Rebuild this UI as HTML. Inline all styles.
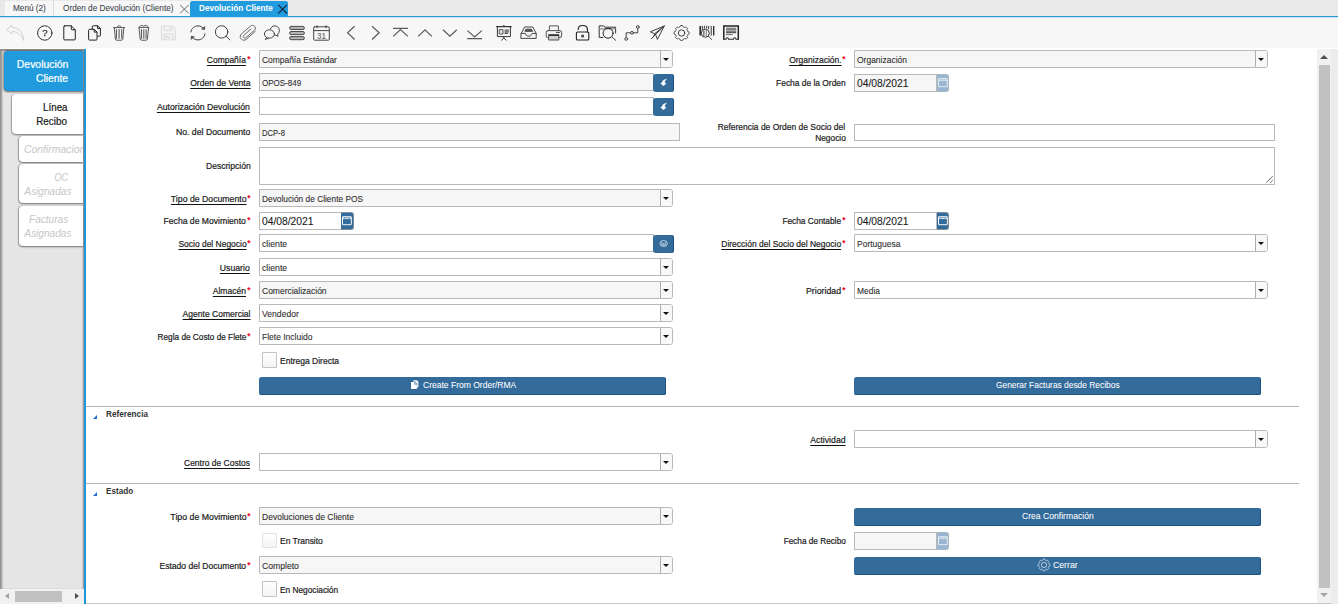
<!DOCTYPE html><html lang="es"><head><meta charset="utf-8"><title>Devolución Cliente</title><style>
*{box-sizing:border-box}
html,body{margin:0;padding:0}
body{width:1338px;height:604px;overflow:hidden;background:#fff;position:relative;font-family:"Liberation Sans",sans-serif;font-size:10px;color:#1c1c1c}
.a{position:absolute}
.t{position:absolute;white-space:nowrap;line-height:12px;height:12px;-webkit-text-stroke:.22px currentColor}
.u{text-decoration:underline;text-decoration-thickness:1px;text-underline-offset:1.5px;text-decoration-color:#111}
.req{position:absolute;color:#f0001c;font-size:9.5px;line-height:12px;font-weight:bold;transform:scale(.88);transform-origin:50% 40%}
.box{position:absolute;border:1px solid #b9b9b9;background:#fff}
.sel{position:absolute;border:1px solid #b9b9b9;background:#fff;border-radius:0 3px 3px 0}
.ro{background:#f6f6f6}
.sel .btn{position:absolute;right:0;top:0;bottom:0;width:11.5px;border-left:1px solid #adadad;background:#f8f8f8;border-radius:0 2px 2px 0}
.sel .btn:after{content:"";position:absolute;left:2.2px;top:6.8px;border-left:3.1px solid transparent;border-right:3.1px solid transparent;border-top:3.5px solid #111}
.bb{position:absolute;background:#336b9b;border-radius:3px}
.btnw{position:absolute;background:#336b9b;border-radius:2.5px;box-shadow:inset -1px -1px 0 #1f527f}
.chk{position:absolute;width:15px;height:15.5px;border:1px solid #c4c4c4;background:linear-gradient(#fff,#f4f4f4);border-radius:1px}
.hr{position:absolute;height:1px;background:#b4b4b4}
.tri{position:absolute;width:0;height:0;border-left:4px solid transparent;border-bottom:4px solid #1c6fd0}
</style></head><body>
<div class="a" style="left:0;top:0;width:1338px;height:16px;background:#e9e9e9"></div>
<div class="a" style="left:0;top:16px;width:1338px;height:1px;background:#2a9adb"></div>
<div class="a" style="left:0;top:17px;width:1338px;height:1px;background:rgba(42,154,219,.22);z-index:2"></div>
<div class="a" id="toolbar" style="left:0;top:17px;width:1338px;height:31px;background:#f7f7f7"></div>
<div class="a" id="side" style="left:0;top:49px;width:84px;height:540px;background:#e5e5e5;overflow:hidden;box-shadow:inset 3px 0 2px -1px #909090, inset 0 3px 2px -1px #8a8a8a, inset -2px 0 2px -1px #999"><div class="a" style="left:82.9px;top:0;width:1.1px;height:540px;background:#9c9c9c"></div><div class="a" style="left:4px;top:1.8px;width:79px;height:39.8px;background:#1f9bde;border-radius:4px 0 0 4px;box-shadow:0 1px 2px rgba(0,0,0,.55), -1px 0 2px rgba(0,0,0,.22), 0 -1px 1px rgba(0,0,0,.22)"></div><div class="a" style="left:11.7px;top:44.7px;width:71.3px;height:40.3px;background:#fff;border-radius:4px 0 0 4px;box-shadow:0 1px 2px rgba(0,0,0,.5), -1px 0 1px rgba(0,0,0,.18)"></div><div class="a" style="left:18.8px;top:87.2px;width:64.2px;height:25.4px;background:#fff;border-radius:4px 0 0 4px;box-shadow:0 1px 2px rgba(0,0,0,.5), -1px 0 1px rgba(0,0,0,.22)"></div><div class="a" style="left:18.8px;top:115.2px;width:64.2px;height:39.2px;background:#fff;border-radius:4px 0 0 4px;box-shadow:0 1px 2px rgba(0,0,0,.5), -1px 0 1px rgba(0,0,0,.22)"></div><div class="a" style="left:18.8px;top:157.4px;width:64.2px;height:39.4px;background:#fff;border-radius:4px 0 0 4px;box-shadow:0 1px 2px rgba(0,0,0,.5), -1px 0 1px rgba(0,0,0,.22)"></div></div>
<div class="t" style="top:58.00px;font-size:10.6px;color:#fff;right:1270.00px;transform-origin:100% 50%;transform:scaleX(0.9843);">Devolución</div>
<div class="t" style="top:72.00px;font-size:10.6px;color:#fff;right:1270.00px;transform-origin:100% 50%;transform:scaleX(0.9702);">Cliente</div>
<div class="t" style="top:101.00px;font-size:10.6px;color:#1a1a1a;right:1270.60px;transform-origin:100% 50%;transform:scaleX(0.9202);">Línea</div>
<div class="t" style="top:115.00px;font-size:10.6px;color:#1a1a1a;right:1270.60px;transform-origin:100% 50%;transform:scaleX(0.9338);">Recibo</div>
<div class="a" style="left:0;top:0;width:83px;height:300px;overflow:hidden">
<div class="t" style="top:143.00px;font-size:10.6px;font-style:italic;-webkit-text-stroke-width:0;color:#c6c6c6;left:24.30px;transform-origin:0 50%;transform:scaleX(0.9836);">Confirmacion</div>
</div>
<div class="t" style="top:171.00px;font-size:10.6px;font-style:italic;-webkit-text-stroke-width:0;color:#c6c6c6;right:1269.70px;transform-origin:100% 50%;transform:scaleX(0.8433);">OC</div>
<div class="t" style="top:185.00px;font-size:10.6px;font-style:italic;-webkit-text-stroke-width:0;color:#c6c6c6;right:1266.80px;transform-origin:100% 50%;transform:scaleX(0.9538);">Asignadas</div>
<div class="t" style="top:213.00px;font-size:10.6px;font-style:italic;-webkit-text-stroke-width:0;color:#c6c6c6;right:1269.70px;transform-origin:100% 50%;transform:scaleX(0.9510);">Facturas</div>
<div class="t" style="top:227.00px;font-size:10.6px;font-style:italic;-webkit-text-stroke-width:0;color:#c6c6c6;right:1266.80px;transform-origin:100% 50%;transform:scaleX(0.9538);">Asignadas</div>
<div class="a" style="left:0;top:589px;width:84px;height:15px;background:#f1f1f1"></div>
<div class="a" style="left:15px;top:591px;width:47px;height:10.8px;background:#c1c1c1"></div>
<div class="a" style="left:5px;top:592.8px;width:0;height:0;border-top:3.7px solid transparent;border-bottom:3.7px solid transparent;border-right:4.2px solid #a3a3a3"></div>
<div class="a" style="left:75px;top:592.8px;width:0;height:0;border-top:3.7px solid transparent;border-bottom:3.7px solid transparent;border-left:4.2px solid #505050"></div>
<div class="a" style="left:83.8px;top:49px;width:2.3px;height:555px;background:#1f96dc"></div>
<div class="a" style="left:1317px;top:49px;width:14.3px;height:555px;background:#f1f1f1"></div>
<div class="a" style="left:1331.3px;top:49px;width:7px;height:555px;background:#ececec"></div>
<div class="a" style="left:1319px;top:65px;width:11px;height:523px;background:#c1c1c1"></div>
<div class="a" style="left:1320.3px;top:54.5px;width:0;height:0;border-left:4.2px solid transparent;border-right:4.2px solid transparent;border-bottom:4.6px solid #505050"></div>
<div class="a" style="left:1320.3px;top:592.9px;width:0;height:0;border-left:4.2px solid transparent;border-right:4.2px solid transparent;border-top:4.6px solid #a3a3a3"></div>
<div class="a" style="left:86px;top:602.6px;width:1245.3px;height:1.4px;background:#c6c6c6"></div>
<div class="sel ro" style="left:259px;top:50px;width:413.7px;height:18.0px"><div class="btn"></div></div>
<div class="t" style="top:53.50px;font-size:9.5px;color:#2e2e2e;left:262.00px;transform-origin:0 50%;transform:scaleX(0.8864);-webkit-text-stroke-width:.1px;">Compañía Estándar</div>
<div class="req" style="left:246.8px;top:53.8px">*</div>
<div class="t u" style="top:53.50px;font-size:9.5px;right:1091.70px;transform-origin:100% 50%;transform:scaleX(0.8895);">Compañía</div>
<div class="box ro" style="left:259px;top:73px;width:395px;height:18.0px"></div>
<div class="t" style="top:76.50px;font-size:9.5px;color:#2e2e2e;left:262.00px;transform-origin:0 50%;transform:scaleX(0.8414);-webkit-text-stroke-width:.1px;">OPOS-849</div>
<div class="bb" style="left:653.3px;top:74.0px;width:20.6px;height:18px;box-shadow:inset -1px 0 0 #1c4f7e"></div>
<svg class="a" style="left:653.3px;top:74.0px" width="21" height="18" viewBox="0 0 21 18"><path d="M14.4 4.8 C10.4 5.3 8.7 7.3 8.9 9 L7.1 9.1 L10.3 12 L13.8 9.3 L12 9.2 C11.6 7.6 12.3 6.2 14.4 4.8 Z" fill="#fff"/></svg>
<div class="t u" style="top:76.50px;font-size:9.5px;right:1087.80px;transform-origin:100% 50%;transform:scaleX(0.9074);">Orden de Venta</div>
<div class="box" style="left:259px;top:97px;width:395px;height:18.0px"></div>
<div class="bb" style="left:653.3px;top:98.0px;width:20.6px;height:18px;box-shadow:inset -1px 0 0 #1c4f7e"></div>
<svg class="a" style="left:653.3px;top:98.0px" width="21" height="18" viewBox="0 0 21 18"><path d="M14.4 4.8 C10.4 5.3 8.7 7.3 8.9 9 L7.1 9.1 L10.3 12 L13.8 9.3 L12 9.2 C11.6 7.6 12.3 6.2 14.4 4.8 Z" fill="#fff"/></svg>
<div class="t u" style="top:100.50px;font-size:9.5px;right:1087.80px;transform-origin:100% 50%;transform:scaleX(0.9125);">Autorización Devolución</div>
<div class="box ro" style="left:259px;top:123px;width:421px;height:18.0px"></div>
<div class="t" style="top:126.50px;font-size:9.5px;color:#2e2e2e;left:262.00px;transform-origin:0 50%;transform:scaleX(0.8031);-webkit-text-stroke-width:.1px;">DCP-8</div>
<div class="t" style="top:125.50px;font-size:9.5px;right:1087.80px;transform-origin:100% 50%;transform:scaleX(0.9148);">No. del Documento</div>
<div class="box" style="left:259px;top:147.2px;width:1016px;height:37.8px"></div>
<svg class="a" style="left:1264px;top:174px" width="10" height="10" viewBox="1264 174 10 10"><path d="M1266.1 182.8 L1272.8 176.1 M1270.3 182.8 L1272.8 180.3" stroke="#4a4a4a" stroke-width=".8" fill="none"/></svg>
<div class="t" style="top:159.50px;font-size:9.5px;right:1087.80px;transform-origin:100% 50%;transform:scaleX(0.8985);">Descripción</div>
<div class="sel ro" style="left:259px;top:189px;width:413.7px;height:18.0px"><div class="btn"></div></div>
<div class="t" style="top:192.50px;font-size:9.5px;color:#2e2e2e;left:262.00px;transform-origin:0 50%;transform:scaleX(0.8773);-webkit-text-stroke-width:.1px;">Devolución de Cliente POS</div>
<div class="req" style="left:246.8px;top:192.8px">*</div>
<div class="t u" style="top:192.50px;font-size:9.5px;right:1091.70px;transform-origin:100% 50%;transform:scaleX(0.9169);">Tipo de Documento</div>
<div class="box" style="left:259px;top:212px;width:83px;height:18.0px"></div>
<div class="t" style="top:215.00px;font-size:11px;-webkit-text-stroke-width:.08px;color:#1c1c1c;left:262.00px;transform-origin:0 50%;transform:scaleX(0.9353);-webkit-text-stroke-width:.1px;">04/08/2021</div>
<div class="bb" style="left:341.4px;top:212px;width:12.4px;height:18.0px;border-radius:0 3px 3px 0;background:#336b9b;border:1px solid #7f8d9b;border-left:none"></div>
<svg class="a" style="left:341.4px;top:212px" width="13" height="18" viewBox="0 0 13 18" fill="none" stroke="#fff" stroke-width=".95"><rect x="1.5" y="4.7" width="8.8" height="8" rx=".3"/><path d="M1.5 6.3 H10.3" stroke-width="1.6" stroke-opacity=".75"/><path d="M3.6 5.5 V6.5 M8.2 5.5 V6.5" stroke="#336b9b" stroke-width=".8"/></svg>
<div class="req" style="left:246.8px;top:214.8px">*</div>
<div class="t" style="top:214.50px;font-size:9.5px;right:1091.70px;transform-origin:100% 50%;transform:scaleX(0.9061);">Fecha de Movimiento</div>
<div class="box" style="left:259px;top:234px;width:395px;height:18.0px"></div>
<div class="t" style="top:237.50px;font-size:9.5px;color:#2e2e2e;left:262.00px;transform-origin:0 50%;transform:scaleX(0.9174);-webkit-text-stroke-width:.1px;">cliente</div>
<div class="bb" style="left:653.3px;top:235.0px;width:20.6px;height:18px;box-shadow:inset -1px 0 0 #1c4f7e"></div>
<svg class="a" style="left:653.3px;top:235.0px" width="21" height="18" viewBox="0 0 21 18" fill="none" stroke="rgba(255,255,255,.72)" stroke-width=".9"><ellipse cx="10.6" cy="8.5" rx="3.7" ry="3"/><path d="M8.9 7 V10 H12.3 V7 M10.6 8.2 V10"/></svg>
<div class="req" style="left:246.8px;top:237.8px">*</div>
<div class="t u" style="top:237.50px;font-size:9.5px;right:1091.70px;transform-origin:100% 50%;transform:scaleX(0.8893);">Socio del Negocio</div>
<div class="sel" style="left:259px;top:258px;width:413.7px;height:18.0px"><div class="btn"></div></div>
<div class="t" style="top:261.50px;font-size:9.5px;color:#2e2e2e;left:262.00px;transform-origin:0 50%;transform:scaleX(0.9174);-webkit-text-stroke-width:.1px;">cliente</div>
<div class="t u" style="top:261.50px;font-size:9.5px;right:1087.80px;transform-origin:100% 50%;transform:scaleX(0.9130);">Usuario</div>
<div class="sel ro" style="left:259px;top:281px;width:413.7px;height:18.0px"><div class="btn"></div></div>
<div class="t" style="top:284.50px;font-size:9.5px;color:#2e2e2e;left:262.00px;transform-origin:0 50%;transform:scaleX(0.8930);-webkit-text-stroke-width:.1px;">Comercialización</div>
<div class="req" style="left:246.8px;top:284.8px">*</div>
<div class="t u" style="top:284.50px;font-size:9.5px;right:1091.70px;transform-origin:100% 50%;transform:scaleX(0.8981);">Almacén</div>
<div class="sel" style="left:259px;top:304px;width:413.7px;height:18.0px"><div class="btn"></div></div>
<div class="t" style="top:307.50px;font-size:9.5px;color:#2e2e2e;left:262.00px;transform-origin:0 50%;transform:scaleX(0.9069);-webkit-text-stroke-width:.1px;">Vendedor</div>
<div class="t u" style="top:307.50px;font-size:9.5px;right:1087.80px;transform-origin:100% 50%;transform:scaleX(0.8992);">Agente Comercial</div>
<div class="sel" style="left:259px;top:327px;width:413.7px;height:18.0px"><div class="btn"></div></div>
<div class="t" style="top:330.50px;font-size:9.5px;color:#2e2e2e;left:262.00px;transform-origin:0 50%;transform:scaleX(0.8936);-webkit-text-stroke-width:.1px;">Flete Incluido</div>
<div class="req" style="left:246.8px;top:330.8px">*</div>
<div class="t" style="top:330.50px;font-size:9.5px;right:1091.70px;transform-origin:100% 50%;transform:scaleX(0.8677);">Regla de Costo de Flete</div>
<div class="chk" style="left:262.1px;top:352.1px"></div>
<div class="t" style="top:354.50px;font-size:9.5px;left:280.30px;transform-origin:0 50%;transform:scaleX(0.8937);">Entrega Directa</div>
<div class="btnw" style="left:259px;top:377.1px;width:407px;height:17.8px"></div>
<div class="t" style="top:378.50px;font-size:9.5px;color:#fff;left:423.40px;transform-origin:0 50%;transform:scaleX(0.8971);-webkit-text-stroke-width:.05px;">Create From Order/RMA</div>
<svg class="a" style="left:410px;top:379px" width="10" height="11" viewBox="410 379 10 11"><path d="M413.3 380.2 H416.8 L418.4 381.8 V387.6 H417.2 V383.6 L415 381.4 H413.3 Z" fill="#fff"/><path d="M411 382.1 H414.5 V384.4 H416.9 V389 H411 Z M415.2 382.3 L416.8 383.8 H415.2 Z" fill="#fff"/></svg>
<div class="sel ro" style="left:854.1px;top:50px;width:413.7px;height:18.0px"><div class="btn"></div></div>
<div class="t" style="top:53.50px;font-size:9.5px;color:#2e2e2e;left:857.10px;transform-origin:0 50%;transform:scaleX(0.8931);-webkit-text-stroke-width:.1px;">Organización</div>
<div class="req" style="left:842.0px;top:53.8px">*</div>
<div class="t u" style="top:53.50px;font-size:9.5px;right:496.50px;transform-origin:100% 50%;transform:scaleX(0.8955);">Organización.</div>
<div class="box ro" style="left:854.1px;top:74px;width:83px;height:18.0px"></div>
<div class="t" style="top:77.00px;font-size:11px;-webkit-text-stroke-width:.08px;color:#1c1c1c;left:857.10px;transform-origin:0 50%;transform:scaleX(0.9353);-webkit-text-stroke-width:.1px;">04/08/2021</div>
<div class="bb" style="left:936.5px;top:74px;width:12.4px;height:18.0px;border-radius:0 3px 3px 0;background:#99b5d0;border:1px solid #a9b6c4;border-left:none"></div>
<svg class="a" style="left:936.5px;top:74px" width="13" height="18" viewBox="0 0 13 18" fill="none" stroke="#e8f0f7" stroke-width=".95"><rect x="1.5" y="4.7" width="8.8" height="8" rx=".3"/><path d="M1.5 6.3 H10.3" stroke-width="1.6" stroke-opacity=".75"/><path d="M3.6 5.5 V6.5 M8.2 5.5 V6.5" stroke="#99b5d0" stroke-width=".8"/></svg>
<div class="t" style="top:76.50px;font-size:9.5px;right:492.60px;transform-origin:100% 50%;transform:scaleX(0.8845);">Fecha de la Orden</div>
<div class="box" style="left:854.1px;top:124px;width:421px;height:17.0px"></div>
<div class="t" style="top:120.50px;font-size:9.5px;right:492.60px;transform-origin:100% 50%;transform:scaleX(0.8908);">Referencia de Orden de Socio del</div>
<div class="t" style="top:131.50px;font-size:9.5px;right:492.60px;transform-origin:100% 50%;transform:scaleX(0.8807);">Negocio</div>
<div class="box" style="left:854.1px;top:212px;width:83px;height:18.0px"></div>
<div class="t" style="top:215.00px;font-size:11px;-webkit-text-stroke-width:.08px;color:#1c1c1c;left:857.10px;transform-origin:0 50%;transform:scaleX(0.9353);-webkit-text-stroke-width:.1px;">04/08/2021</div>
<div class="bb" style="left:936.5px;top:212px;width:12.4px;height:18.0px;border-radius:0 3px 3px 0;background:#336b9b;border:1px solid #7f8d9b;border-left:none"></div>
<svg class="a" style="left:936.5px;top:212px" width="13" height="18" viewBox="0 0 13 18" fill="none" stroke="#fff" stroke-width=".95"><rect x="1.5" y="4.7" width="8.8" height="8" rx=".3"/><path d="M1.5 6.3 H10.3" stroke-width="1.6" stroke-opacity=".75"/><path d="M3.6 5.5 V6.5 M8.2 5.5 V6.5" stroke="#336b9b" stroke-width=".8"/></svg>
<div class="req" style="left:842.0px;top:214.8px">*</div>
<div class="t" style="top:214.50px;font-size:9.5px;right:496.50px;transform-origin:100% 50%;transform:scaleX(0.8751);">Fecha Contable</div>
<div class="sel" style="left:854.1px;top:234px;width:413.7px;height:18.0px"><div class="btn"></div></div>
<div class="t" style="top:237.50px;font-size:9.5px;color:#2e2e2e;left:857.10px;transform-origin:0 50%;transform:scaleX(0.8931);-webkit-text-stroke-width:.1px;">Portuguesa</div>
<div class="req" style="left:842.0px;top:237.8px">*</div>
<div class="t u" style="top:237.50px;font-size:9.5px;right:496.50px;transform-origin:100% 50%;transform:scaleX(0.8938);">Dirección del Socio del Negocio</div>
<div class="sel" style="left:854.1px;top:281px;width:413.7px;height:18.0px"><div class="btn"></div></div>
<div class="t" style="top:284.50px;font-size:9.5px;color:#2e2e2e;left:857.10px;transform-origin:0 50%;transform:scaleX(0.8889);-webkit-text-stroke-width:.1px;">Media</div>
<div class="req" style="left:842.0px;top:284.8px">*</div>
<div class="t" style="top:284.50px;font-size:9.5px;right:496.50px;transform-origin:100% 50%;transform:scaleX(0.9229);">Prioridad</div>
<div class="btnw" style="left:854.1px;top:377.1px;width:407px;height:17.8px"></div>
<div class="t" style="top:378.50px;font-size:9.5px;color:#fff;left:996.10px;transform-origin:0 50%;transform:scaleX(0.8833);-webkit-text-stroke-width:.05px;">Generar Facturas desde Recibos</div>
<div class="hr" style="left:86px;top:406px;width:1213px"></div>
<div class="tri" style="left:93.2px;top:414.6px"></div>
<div class="t" style="top:408.00px;font-size:9.2px;font-weight:bold;-webkit-text-stroke-width:0;color:#333;left:106.20px;transform-origin:0 50%;transform:scaleX(0.8939);">Referencia</div>
<div class="sel" style="left:854.1px;top:430px;width:413.7px;height:18.0px"><div class="btn"></div></div>
<div class="t u" style="top:433.50px;font-size:9.5px;right:492.60px;transform-origin:100% 50%;transform:scaleX(0.9154);">Actividad</div>
<div class="sel" style="left:259px;top:453px;width:413.7px;height:18.0px"><div class="btn"></div></div>
<div class="t u" style="top:456.50px;font-size:9.5px;right:1087.80px;transform-origin:100% 50%;transform:scaleX(0.8913);">Centro de Costos</div>
<div class="hr" style="left:86px;top:483px;width:1213px"></div>
<div class="tri" style="left:93.2px;top:491.6px"></div>
<div class="t" style="top:485.00px;font-size:9.2px;font-weight:bold;-webkit-text-stroke-width:0;color:#333;left:106.20px;transform-origin:0 50%;transform:scaleX(0.8844);">Estado</div>
<div class="sel ro" style="left:259px;top:507px;width:413.7px;height:18.0px"><div class="btn"></div></div>
<div class="t" style="top:510.50px;font-size:9.5px;color:#2e2e2e;left:262.00px;transform-origin:0 50%;transform:scaleX(0.8970);-webkit-text-stroke-width:.1px;">Devoluciones de Cliente</div>
<div class="req" style="left:246.8px;top:510.8px">*</div>
<div class="t" style="top:510.50px;font-size:9.5px;right:1091.70px;transform-origin:100% 50%;transform:scaleX(0.9231);">Tipo de Movimiento</div>
<div class="chk" style="left:262.1px;top:532.5px;border-color:#e2e2e2"></div>
<div class="t" style="top:534.50px;font-size:9.5px;left:280.30px;transform-origin:0 50%;transform:scaleX(0.8905);">En Transito</div>
<div class="sel ro" style="left:259px;top:556px;width:413.7px;height:18.0px"><div class="btn"></div></div>
<div class="t" style="top:559.50px;font-size:9.5px;color:#2e2e2e;left:262.00px;transform-origin:0 50%;transform:scaleX(0.9073);-webkit-text-stroke-width:.1px;">Completo</div>
<div class="req" style="left:246.8px;top:559.8px">*</div>
<div class="t" style="top:559.50px;font-size:9.5px;right:1091.70px;transform-origin:100% 50%;transform:scaleX(0.9020);">Estado del Documento</div>
<div class="chk" style="left:262.1px;top:581px"></div>
<div class="t" style="top:583.50px;font-size:9.5px;left:280.30px;transform-origin:0 50%;transform:scaleX(0.8731);">En Negociación</div>
<div class="btnw" style="left:854.1px;top:507.9px;width:407px;height:17.8px"></div>
<div class="t" style="top:509.50px;font-size:9.5px;color:#fff;left:1021.80px;transform-origin:0 50%;transform:scaleX(0.9053);-webkit-text-stroke-width:.05px;">Crea Confirmación</div>
<div class="box ro" style="left:854.1px;top:532px;width:83px;height:18.0px"></div>
<div class="bb" style="left:936.5px;top:532px;width:12.4px;height:18.0px;border-radius:0 3px 3px 0;background:#99b5d0;border:1px solid #a9b6c4;border-left:none"></div>
<svg class="a" style="left:936.5px;top:532px" width="13" height="18" viewBox="0 0 13 18" fill="none" stroke="#e8f0f7" stroke-width=".95"><rect x="1.5" y="4.7" width="8.8" height="8" rx=".3"/><path d="M1.5 6.3 H10.3" stroke-width="1.6" stroke-opacity=".75"/><path d="M3.6 5.5 V6.5 M8.2 5.5 V6.5" stroke="#99b5d0" stroke-width=".8"/></svg>
<div class="t" style="top:534.50px;font-size:9.5px;right:492.60px;transform-origin:100% 50%;transform:scaleX(0.8660);">Fecha de Recibo</div>
<div class="btnw" style="left:854.1px;top:557.1px;width:407px;height:17.8px"></div>
<svg class="a" style="left:1037px;top:558px" width="14" height="14" viewBox="-7 -7 14 14" fill="none" stroke="rgba(255,255,255,.85)" stroke-width=".75"><circle r="2.6"/><path d="M0.00 -5.90 L0.19 -5.90 L0.39 -5.89 L0.58 -5.87 L0.77 -5.85 L0.94 -5.71 L1.05 -5.30 L1.14 -4.88 L1.27 -4.73 L1.42 -4.69 L1.58 -4.64 L1.73 -4.59 L1.88 -4.53 L2.02 -4.46 L2.17 -4.39 L2.31 -4.32 L2.45 -4.24 L2.65 -4.26 L3.00 -4.49 L3.37 -4.70 L3.59 -4.68 L3.74 -4.56 L3.89 -4.44 L4.03 -4.31 L4.17 -4.17 L4.31 -4.03 L4.44 -3.89 L4.56 -3.74 L4.68 -3.59 L4.70 -3.37 L4.49 -3.00 L4.26 -2.65 L4.24 -2.45 L4.32 -2.31 L4.39 -2.17 L4.46 -2.02 L4.53 -1.88 L4.59 -1.73 L4.64 -1.58 L4.69 -1.42 L4.73 -1.27 L4.88 -1.14 L5.30 -1.05 L5.71 -0.94 L5.85 -0.77 L5.87 -0.58 L5.89 -0.39 L5.90 -0.19 L5.90 -0.00 L5.90 0.19 L5.89 0.39 L5.87 0.58 L5.85 0.77 L5.71 0.94 L5.30 1.05 L4.88 1.14 L4.73 1.27 L4.69 1.42 L4.64 1.58 L4.59 1.73 L4.53 1.88 L4.46 2.02 L4.39 2.17 L4.32 2.31 L4.24 2.45 L4.26 2.65 L4.49 3.00 L4.70 3.37 L4.68 3.59 L4.56 3.74 L4.44 3.89 L4.31 4.03 L4.17 4.17 L4.03 4.31 L3.89 4.44 L3.74 4.56 L3.59 4.68 L3.37 4.70 L3.00 4.49 L2.65 4.26 L2.45 4.24 L2.31 4.32 L2.17 4.39 L2.02 4.46 L1.88 4.53 L1.73 4.59 L1.58 4.64 L1.42 4.69 L1.27 4.73 L1.14 4.88 L1.05 5.30 L0.94 5.71 L0.77 5.85 L0.58 5.87 L0.39 5.89 L0.19 5.90 L0.00 5.90 L-0.19 5.90 L-0.39 5.89 L-0.58 5.87 L-0.77 5.85 L-0.94 5.71 L-1.05 5.30 L-1.14 4.88 L-1.27 4.73 L-1.42 4.69 L-1.58 4.64 L-1.73 4.59 L-1.88 4.53 L-2.02 4.46 L-2.17 4.39 L-2.31 4.32 L-2.45 4.24 L-2.65 4.26 L-3.00 4.49 L-3.37 4.70 L-3.59 4.68 L-3.74 4.56 L-3.89 4.44 L-4.03 4.31 L-4.17 4.17 L-4.31 4.03 L-4.44 3.89 L-4.56 3.74 L-4.68 3.59 L-4.70 3.37 L-4.49 3.00 L-4.26 2.65 L-4.24 2.45 L-4.32 2.31 L-4.39 2.17 L-4.46 2.02 L-4.53 1.88 L-4.59 1.73 L-4.64 1.58 L-4.69 1.42 L-4.73 1.27 L-4.88 1.14 L-5.30 1.05 L-5.71 0.94 L-5.85 0.77 L-5.87 0.58 L-5.89 0.39 L-5.90 0.19 L-5.90 0.00 L-5.90 -0.19 L-5.89 -0.39 L-5.87 -0.58 L-5.85 -0.77 L-5.71 -0.94 L-5.30 -1.05 L-4.88 -1.14 L-4.73 -1.27 L-4.69 -1.42 L-4.64 -1.58 L-4.59 -1.73 L-4.53 -1.88 L-4.46 -2.02 L-4.39 -2.17 L-4.32 -2.31 L-4.24 -2.45 L-4.26 -2.65 L-4.49 -3.00 L-4.70 -3.37 L-4.68 -3.59 L-4.56 -3.74 L-4.44 -3.89 L-4.31 -4.03 L-4.17 -4.17 L-4.03 -4.31 L-3.89 -4.44 L-3.74 -4.56 L-3.59 -4.68 L-3.37 -4.70 L-3.00 -4.49 L-2.65 -4.26 L-2.45 -4.24 L-2.31 -4.32 L-2.17 -4.39 L-2.02 -4.46 L-1.88 -4.53 L-1.73 -4.59 L-1.58 -4.64 L-1.42 -4.69 L-1.27 -4.73 L-1.14 -4.88 L-1.05 -5.30 L-0.94 -5.71 L-0.77 -5.85 L-0.58 -5.87 L-0.39 -5.89 L-0.19 -5.90 Z"/></svg>
<div class="t" style="top:558.50px;font-size:9.5px;color:#fff;left:1052.70px;transform-origin:0 50%;transform:scaleX(0.9138);-webkit-text-stroke-width:.05px;">Cerrar</div>
<div class="a" style="left:4.7px;top:0.5px;width:185px;height:15.5px;background:#f7f7f7"></div>
<div class="a" style="left:53.3px;top:0.5px;width:1px;height:15.5px;background:#dcdcdc"></div>
<div class="t" style="top:1.50px;font-size:9.5px;color:#40444c;left:13.20px;transform-origin:0 50%;transform:scaleX(0.8628);-webkit-text-stroke-width:.08px;">Menú (2)</div>
<div class="t" style="top:1.50px;font-size:9.5px;color:#40444c;left:63.30px;transform-origin:0 50%;transform:scaleX(0.8647);-webkit-text-stroke-width:.08px;">Orden de Devolución (Cliente)</div>
<svg class="a" style="left:179px;top:3px" width="11" height="12" viewBox="179 3 11 12"><path d="M180.2 4.9 L188.6 13.3 M188.6 4.9 L180.2 13.3" stroke="#666" stroke-width="1" fill="none"/></svg>
<div class="a" style="left:189.6px;top:1px;width:98.4px;height:16px;background:#1f9bde;border-radius:2.5px 2.5px 0 0"></div>
<div class="t" style="top:1.50px;font-size:9.5px;font-weight:bold;-webkit-text-stroke-width:0;color:#fff;left:198.60px;transform-origin:0 50%;transform:scaleX(0.8642);">Devolución Cliente</div>
<svg class="a" style="left:277px;top:3px" width="11" height="12" viewBox="277 3 11 12"><path d="M278.3 4.9 L286.9 13.5 M286.9 4.9 L278.3 13.5" stroke="#14283a" stroke-width="1.1" fill="none"/></svg>
<svg class="a" style="left:0;top:17px;will-change:transform" width="760" height="31" viewBox="0 17 760 31" fill="none" stroke="#2e2e2e" stroke-width="1" stroke-linecap="round" stroke-linejoin="round">
<!-- undo (disabled) -->
<g stroke="#cdcdcd" stroke-width=".9">
<path d="M7.2 29.3 L11.6 25.2 L12 27.5 C17.2 27.3 22.6 30.2 23.8 40.6 C21.4 34.6 17.4 31.7 12.1 31.3 L11.7 33.6 Z"/>
</g>
<!-- help -->
<circle cx="44.8" cy="33" r="7.2" stroke="#333"/>
<text x="44.9" y="36.4" font-family="Liberation Sans, sans-serif" font-size="9.6" fill="#2e2e2e" stroke="#2e2e2e" stroke-width=".25" text-anchor="middle">?</text>
<!-- new -->
<path d="M64.7 25.8 H71.2 L75.3 29.9 V39 Q75.3 39.9 74.4 39.9 H64.7 Q63.8 39.9 63.8 39 V26.7 Q63.8 25.8 64.7 25.8 Z M71.3 25.9 V29 Q71.3 29.8 72.1 29.8 H75.2" stroke="#222"/>
<!-- copy -->
<path d="M92.3 28.8 V26.6 Q92.3 25.8 93.1 25.8 H97.6 L100.4 28.6 V35.4 Q100.4 36.2 99.6 36.2 H97.8 M97.6 25.9 V28.6 H100.3" stroke="#222"/>
<path d="M88.6 30.1 Q88.6 29.3 89.4 29.3 H94.2 L97 32.1 V39.3 Q97 40.1 96.2 40.1 H89.4 Q88.6 40.1 88.6 39.3 Z M94.2 29.4 V32.1 H96.9" stroke="#222"/>
<!-- trash 1 -->
<g stroke="#555">
<path d="M113.5 27.6 H124.7 M117 27.4 C117.2 25.2 121.2 25.2 121.4 27.4" />
<path d="M114.4 27.8 L115.4 39 C115.5 40 116 40.2 117 40.2 H121.2 C122.2 40.2 122.7 40 122.8 39 L123.8 27.8"/>
<path d="M116.5 29.6 V38.2 M119.1 29.6 V38.2 M121.7 29.6 V38.2" stroke="#5e5e5e" stroke-width="1.1"/>
</g>
<!-- trash 2 -->
<g stroke="#555">
<path d="M139 27.9 C139.4 25 143.2 24.8 143.8 26.4 C144.4 24.8 148.2 25 148.6 27.9" />
<path d="M139 27.8 L140.2 39 C140.3 40 140.8 40.2 141.8 40.2 H145.8 C146.8 40.2 147.3 40 147.4 39 L148.6 27.8 Z"/>
<path d="M141.5 29.6 V38.2 M143.8 29.6 V38.2 M146.1 29.6 V38.2" stroke="#5e5e5e" stroke-width="1.1"/>
</g>
<!-- save (disabled) -->
<g stroke="#dcdcdc" stroke-width="1">
<path d="M161.8 26 H172.6 L175.4 28.8 V39.8 H161.8 Z" fill="#f4f4f4"/>
<path d="M164.6 26 V30.6 H172 V26 M170 27 V29.6 M164 39.8 V34 H173.2 V39.8" />
<path d="M165.6 36.2 H168.6 M165.6 37.6 H171" />
</g>
<!-- refresh -->
<g stroke="#3a3a3a" stroke-width="1">
<path d="M190.9 32 C191.3 28.3 194.6 25.9 198 25.9 C200.4 25.9 202.4 27 203.8 28.8"/>
<path d="M204.9 26.6 L204.6 29.7 L201.7 29.1 Z" fill="#444" stroke-width=".4"/>
<path d="M205 33.8 C204.6 37.5 201.3 39.9 197.9 39.9 C195.5 39.9 193.5 38.8 192.1 37"/>
<path d="M191 39.2 L191.3 36.1 L194.2 36.7 Z" fill="#444" stroke-width=".4"/>
</g>
<!-- search -->
<circle cx="221.6" cy="31.9" r="6.2" stroke="#3a3a3a" stroke-width=".95"/><path d="M226.2 36.3 L229.9 39.9" stroke="#3a3a3a" stroke-width=".95"/>
<!-- paperclip -->
<g stroke="#666" stroke-width="1">
<path d="M255.4 31.2 L246.2 39.4 C243.2 41.9 238.4 38.2 240.8 34.8 C241.2 34.2 241.6 33.8 242.2 33.2 L250.4 26.2 C253.2 23.8 257.2 27.2 254.4 30.2 L246 37.6 C244.4 38.9 242.2 37 243.8 35.4 L251 29"/>
</g>
<!-- chat -->
<g stroke="#444" stroke-width="1">
<path d="M270.2 29.1 A4.7 4.7 0 1 1 277.7 34.1 L278 36.3 L275.9 35.2 L274.9 35.3"/>
<ellipse cx="269.4" cy="34" rx="5" ry="4.2"/>
<path d="M266.5 37.5 L265.3 39.5 L268.4 38.2" fill="#f7f7f7"/>
</g>
<!-- grid toggle -->
<g stroke="#4a4a4a" fill="#b4b4b4" stroke-width="1">
<rect x="289.6" y="26.4" width="14.8" height="3.1" rx="1.55"/>
<rect x="289.6" y="31.5" width="14.8" height="3.1" rx="1.55"/>
<rect x="289.6" y="36.6" width="14.8" height="3.1" rx="1.55"/>
</g>
<!-- calendar -->
<g stroke="#444">
<rect x="313.7" y="26.8" width="15.6" height="13.4" rx="1"/>
<path d="M313.7 30.6 H329.3 M317 25.3 V28.2 M326 25.3 V28.2" stroke-linecap="butt"/>
<text x="321.5" y="38.9" font-family="Liberation Sans, sans-serif" font-size="8.2" font-weight="bold" fill="#808080" stroke="none" text-anchor="middle">31</text>
</g>
<!-- nav arrows -->
<g stroke="#5a5a5a" stroke-width="1.2" stroke-linecap="butt" stroke-linejoin="miter">
<path d="M354.6 26.2 L347.6 32.8 L354.6 39.5"/>
<path d="M372 26.2 L379.2 32.8 L372 39.5"/>
<path d="M393 28.4 H408 M393.2 36.4 L400.5 29.6 L407.8 36.4"/>
<path d="M418.2 36.4 L425 29.8 L431.8 36.4"/>
<path d="M443 29.8 L449.9 36.2 L456.8 29.8"/>
<path d="M467.4 30.6 L474.6 37 L481.8 30.6 M467.2 38.6 H482"/>
</g>
<!-- report -->
<g stroke="#333" stroke-width="1">
<path d="M496.6 26.6 H511.2" stroke-width="1.3"/>
<path d="M497.4 26.8 V36.6 H510.4 V26.8"/>
<path d="M503.9 25.4 V26.4 M503.9 36.8 V38 M501.6 40.2 L503.9 38 L506.2 40.2"/>
<rect x="499.6" y="29.6" width="3.4" height="4.4" fill="#e3e3e3" stroke="#555"/>
<path d="M505 30.2 H508.4 M505 31.8 H508.4 M505 33.4 H507.4" stroke="#555" stroke-width="1.2"/>
</g>
<!-- archive -->
<g stroke="#444" stroke-width="1">
<path d="M521.2 33.4 L524.6 27 H532.8 L536.2 33.4 V38.4 H521.2 Z"/>
<path d="M521.2 33.4 H525.4 C525.8 37.2 531.6 37.2 532 33.4 H536.2" fill="#e4e4e4"/>
<path d="M525 31 L526 29.2 H531.4 L532.4 31 Z" fill="#555"/>
</g>
<!-- print -->
<g stroke="#555" stroke-width="1">
<path d="M549.4 30.6 V25.9 H558.4 V30.6"/>
<rect x="546.2" y="30.6" width="15.4" height="7" rx="1.6" fill="#f1f1f1"/>
<path d="M549 34.6 H558.8 V40 H549 Z" fill="#d0d0d0"/>
<path d="M549.4 35.4 H558.4" stroke="#333" stroke-width="1.4"/>
<path d="M556.6 32.4 H557.2 M558.6 32.4 H559.2" stroke="#333" stroke-width="1.2"/>
</g>
<!-- lock -->
<g stroke="#222" stroke-width="1.1">
<rect x="576.4" y="32" width="12.4" height="8" rx="1"/>
<path d="M578.2 29.4 C578.2 24.2 587.4 24.2 587.4 29.4 V32"/>
<circle cx="582.6" cy="36" r="1" stroke="#333"/>
</g>
<!-- zoom across -->
<g stroke="#333" stroke-width="1">
<path d="M603 37.4 H599.2 V25.9 H603.6 L604.8 27.2 H615.6 V33"/>
<path d="M599.4 28.8 H615.4" stroke="#888" stroke-width="1.2"/>
<circle cx="608.1" cy="33.2" r="5" stroke="#222"/>
<path d="M611.8 36.8 L615.8 40.4" stroke="#444"/>
</g>
<!-- workflow -->
<g stroke="#444" stroke-width="1">
<path d="M626.2 37.4 V32.8 H630.6 M633.4 32.8 H637.8 V28.4"/>
<circle cx="626.2" cy="38.9" r="1.4"/><circle cx="632" cy="32.8" r="1.4"/><circle cx="637.8" cy="27" r="1.4"/>
</g>
<!-- send -->
<g stroke="#3a3a3a" stroke-width="1">
<path d="M664.2 26 L650.4 31.8 L654.6 33.8 L664.2 26 L657.4 39.4 L655.6 34.4 M664.2 26 L651.4 38.6 M655 33.8 L653.4 36.6"/>
</g>
<!-- gear -->
<g stroke="#3c3c3c" stroke-width="1">
<path d="M681.60 25.50 L681.78 25.50 L681.97 25.51 L682.15 25.52 L682.34 25.54 L682.52 25.56 L682.70 25.58 L682.84 25.86 L682.95 26.23 L683.03 26.61 L683.13 26.89 L683.28 26.93 L683.43 26.97 L683.58 27.02 L683.72 27.07 L683.87 27.12 L684.01 27.18 L684.15 27.24 L684.29 27.30 L684.43 27.37 L684.57 27.44 L684.71 27.52 L684.84 27.60 L685.10 27.47 L685.43 27.26 L685.78 27.07 L686.07 26.98 L686.21 27.09 L686.36 27.20 L686.50 27.32 L686.64 27.44 L686.77 27.57 L686.90 27.70 L687.03 27.83 L687.16 27.96 L687.28 28.10 L687.40 28.24 L687.51 28.39 L687.62 28.53 L687.53 28.82 L687.34 29.17 L687.13 29.50 L687.00 29.76 L687.08 29.89 L687.16 30.03 L687.23 30.17 L687.30 30.31 L687.36 30.45 L687.42 30.59 L687.48 30.73 L687.53 30.88 L687.58 31.02 L687.63 31.17 L687.67 31.32 L687.71 31.47 L687.99 31.57 L688.37 31.65 L688.74 31.76 L689.02 31.90 L689.04 32.08 L689.06 32.26 L689.08 32.45 L689.09 32.63 L689.10 32.82 L689.10 33.00 L689.10 33.18 L689.09 33.37 L689.08 33.55 L689.06 33.74 L689.04 33.92 L689.02 34.10 L688.74 34.24 L688.37 34.35 L687.99 34.43 L687.71 34.53 L687.67 34.68 L687.63 34.83 L687.58 34.98 L687.53 35.12 L687.48 35.27 L687.42 35.41 L687.36 35.55 L687.30 35.69 L687.23 35.83 L687.16 35.97 L687.08 36.11 L687.00 36.24 L687.13 36.50 L687.34 36.83 L687.53 37.18 L687.62 37.47 L687.51 37.61 L687.40 37.76 L687.28 37.90 L687.16 38.04 L687.03 38.17 L686.90 38.30 L686.77 38.43 L686.64 38.56 L686.50 38.68 L686.36 38.80 L686.21 38.91 L686.07 39.02 L685.78 38.93 L685.43 38.74 L685.10 38.53 L684.84 38.40 L684.71 38.48 L684.57 38.56 L684.43 38.63 L684.29 38.70 L684.15 38.76 L684.01 38.82 L683.87 38.88 L683.72 38.93 L683.58 38.98 L683.43 39.03 L683.28 39.07 L683.13 39.11 L683.03 39.39 L682.95 39.77 L682.84 40.14 L682.70 40.42 L682.52 40.44 L682.34 40.46 L682.15 40.48 L681.97 40.49 L681.78 40.50 L681.60 40.50 L681.42 40.50 L681.23 40.49 L681.05 40.48 L680.86 40.46 L680.68 40.44 L680.50 40.42 L680.36 40.14 L680.25 39.77 L680.17 39.39 L680.07 39.11 L679.92 39.07 L679.77 39.03 L679.62 38.98 L679.48 38.93 L679.33 38.88 L679.19 38.82 L679.05 38.76 L678.91 38.70 L678.77 38.63 L678.63 38.56 L678.49 38.48 L678.36 38.40 L678.10 38.53 L677.77 38.74 L677.42 38.93 L677.13 39.02 L676.99 38.91 L676.84 38.80 L676.70 38.68 L676.56 38.56 L676.43 38.43 L676.30 38.30 L676.17 38.17 L676.04 38.04 L675.92 37.90 L675.80 37.76 L675.69 37.61 L675.58 37.47 L675.67 37.18 L675.86 36.83 L676.07 36.50 L676.20 36.24 L676.12 36.11 L676.04 35.97 L675.97 35.83 L675.90 35.69 L675.84 35.55 L675.78 35.41 L675.72 35.27 L675.67 35.12 L675.62 34.98 L675.57 34.83 L675.53 34.68 L675.49 34.53 L675.21 34.43 L674.83 34.35 L674.46 34.24 L674.18 34.10 L674.16 33.92 L674.14 33.74 L674.12 33.55 L674.11 33.37 L674.10 33.18 L674.10 33.00 L674.10 32.82 L674.11 32.63 L674.12 32.45 L674.14 32.26 L674.16 32.08 L674.18 31.90 L674.46 31.76 L674.83 31.65 L675.21 31.57 L675.49 31.47 L675.53 31.32 L675.57 31.17 L675.62 31.02 L675.67 30.88 L675.72 30.73 L675.78 30.59 L675.84 30.45 L675.90 30.31 L675.97 30.17 L676.04 30.03 L676.12 29.89 L676.20 29.76 L676.07 29.50 L675.86 29.17 L675.67 28.82 L675.58 28.53 L675.69 28.39 L675.80 28.24 L675.92 28.10 L676.04 27.96 L676.17 27.83 L676.30 27.70 L676.43 27.57 L676.56 27.44 L676.70 27.32 L676.84 27.20 L676.99 27.09 L677.13 26.98 L677.42 27.07 L677.77 27.26 L678.10 27.47 L678.36 27.60 L678.49 27.52 L678.63 27.44 L678.77 27.37 L678.91 27.30 L679.05 27.24 L679.19 27.18 L679.33 27.12 L679.48 27.07 L679.62 27.02 L679.77 26.97 L679.92 26.93 L680.07 26.89 L680.17 26.61 L680.25 26.23 L680.36 25.86 L680.50 25.58 L680.68 25.56 L680.86 25.54 L681.05 25.52 L681.23 25.51 L681.42 25.50 Z"/>
<circle cx="681.6" cy="33" r="3.2"/>
</g>
<!-- product info -->
<g stroke="#222" stroke-width="1" stroke-linecap="butt">
<path d="M700.2 25.9 V35.6" stroke-width="1.5"/>
<path d="M702.3 25.9 V30.4 M704.4 25.9 V28.6 M706.6 25.9 V28.4 M708.6 25.9 V29" stroke-width=".9"/>
<path d="M711.2 25.9 V35.6" stroke-width=".9"/>
<path d="M713.7 25.9 V35.6" stroke-width="1.3"/>
<circle cx="705.3" cy="33.2" r="4" stroke="#333" fill="#f7f7f7"/>
<path d="M703.9 30.6 V35.8" stroke="#333" stroke-width="1"/><path d="M706.3 30.2 V36.2" stroke="#777" stroke-width="1"/>
<path d="M708.4 36.3 L711.8 39.6" stroke="#444" stroke-linecap="round"/>
</g>
<!-- receipt -->
<g stroke="#222" stroke-width="1.5" stroke-linejoin="miter" stroke-linecap="butt">
<path d="M723.8 39.4 V25.9 H738.3 V39.4"/>
<path d="M723.2 39.2 H726 C726.2 37.2 728.4 37.2 728.6 39.2 H733.4 C733.6 37.2 735.8 37.2 736 39.2 H739" stroke-width="1.1" stroke="#2a2a2a"/>
<path d="M726 28.3 H736.2 M726 29.8 H736.2 M726 31.3 H736.2 M726 32.6 H736.2" stroke-width="1.1" stroke="#5a5a5a"/>
<path d="M726 34.6 H732.6" stroke-width="1" stroke="#666"/>
</g>
</svg>

</body></html>
